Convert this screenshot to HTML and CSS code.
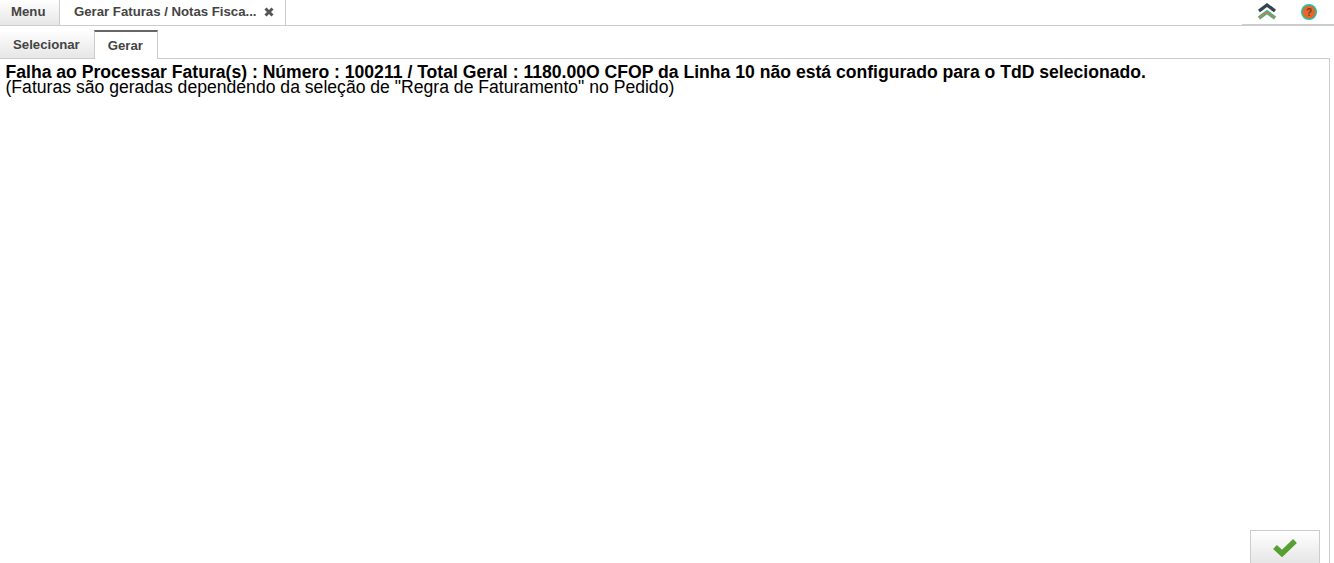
FILE: index.html
```html
<!DOCTYPE html>
<html lang="pt">
<head>
    <meta charset="UTF-8">
    <title>Gerar Faturas</title>
    <link rel="stylesheet" href="styles.css">
</head>
<body>
    <!-- abas de cima -->
    <div class="topBar">
        <div class="menuTab">Menu</div>
        <div class="pageTab">
            <span>Gerar Faturas / Notas Fisca...</span>
            <svg class="closeX" width="10" height="10" viewBox="0 0 10 10">
                <path d="M1.5 1.5 L8.5 8.5 M8.5 1.5 L1.5 8.5" fill="none" stroke="#555" stroke-width="3"/>
            </svg>
        </div>
        <div class="topIcons">
            <svg width="22" height="20" viewBox="0 0 22 20">
                <path d="M3 9 L11 3 L19 9" fill="none" stroke="#34444f" stroke-width="3.4"/>
                <path d="M3 16 L11 10 L19 16" fill="none" stroke="#12c4a8" stroke-width="3.8"/>
                <path d="M3 16 L11 10 L19 16" fill="none" stroke="#e8742c" stroke-width="1.6"/>
            </svg>
            <svg class="helpIcon" width="18" height="18" viewBox="0 0 18 18">
                <circle cx="9" cy="9" r="8" fill="#0fc9b0"/>
                <circle cx="9" cy="9" r="6.6" fill="#e8682a"/>
                <text x="9" y="13" class="helpMark">?</text>
            </svg>
        </div>
    </div>

    <!-- abas internas -->
    <div class="subTabs">
        <div class="subTab">Selecionar</div>
        <div class="subTab active">Gerar</div>
    </div>

    <div class="content">
        <div class="msg">
            <b>Falha ao Processar Fatura(s) : Número : 100211 / Total Geral : 1180.00O CFOP da Linha 10 não está configurado para o TdD selecionado.</b><br>
            (Faturas são geradas dependendo da seleção de "Regra de Faturamento" no Pedido)
        </div>
        <div class="footer">
            <div class="okBtn">
                <svg width="26" height="20" viewBox="0 0 26 20">
                    <path d="M3 10 L10 16.5 L23 4" fill="none" stroke="#55a030" stroke-width="5.5"/>
                </svg>
            </div>
        </div>
    </div>
</body>
</html>
```

FILE: styles.css
```css
* {
    margin: 0;
    padding: 0;
    box-sizing: border-box;
}
html, body {
    height: 100%;
    overflow: hidden;
}
body {
    display: flex;
    flex-direction: column;
    background-color: #fff;
    font-family: "Liberation Sans", Arial, sans-serif;
    color: #000;
}
.topBar {
    display: flex;
    height: 26px;
    flex: none;
    border-bottom: 1px solid #ccc;
    font-size: 13.2px;
    font-weight: bold;
    color: #444;
}
.menuTab {
    width: 60px;
    padding: 4px 0 0 11px;
    background: linear-gradient(#fff, #e6e6e6);
    border-right: 1px solid #ccc;
}
.pageTab {
    display: flex;
    justify-content: space-between;
    width: 226px;
    padding: 4px 11px 0 14px;
    border-right: 1px solid #ccc;
}
.closeX {
    margin-top: 3px;
}
.topIcons {
    display: flex;
    gap: 22px;
    margin-left: auto;
    width: 92px;
    height: 25px;
    padding: 2px 16px 0 14px;
    background-color: #fff;
    border-bottom: 1px solid #ccc;
}
.helpIcon {
    margin-top: 1px;
}
.helpMark {
    font-size: 10px;
    font-weight: bold;
    fill: #7a3a1a;
    text-anchor: middle;
}
.subTabs {
    display: flex;
    flex: none;
    height: 33px;
    padding-top: 4px;
    font-size: 13.2px;
    font-weight: bold;
    color: #444;
}
.subTab {
    height: 28px;
    padding: 7px 14px 0 13px;
    background: linear-gradient(#fff, #e6e6e6);
}
.subTab.active {
    height: 29px;
    padding: 6px 14px 0 13px;
    background: #fff;
    border: 1px solid #ccc;
    border-top: 2px solid #666;
    border-bottom: none;
    position: relative;
    z-index: 1;
}
.content {
    display: flex;
    flex-direction: column;
    flex: 1;
    width: 1330px;
    margin-top: -1px;
    border: 1px solid #ccc;
    border-bottom: none;
    border-left: none;
    padding: 6px 9px 0 5.5px;
}
.msg {
    flex: 1;
    font-size: 17.6px;
    line-height: 15px;
}
.footer {
    display: flex;
    justify-content: flex-end;
}
.okBtn {
    width: 70px;
    height: 33px;
    margin-top: -1px;
    padding-top: 6px;
    text-align: center;
    background: linear-gradient(#fff, #e6e6e6);
    border: 1px solid #ccc;
    border-bottom: none;
}
```
